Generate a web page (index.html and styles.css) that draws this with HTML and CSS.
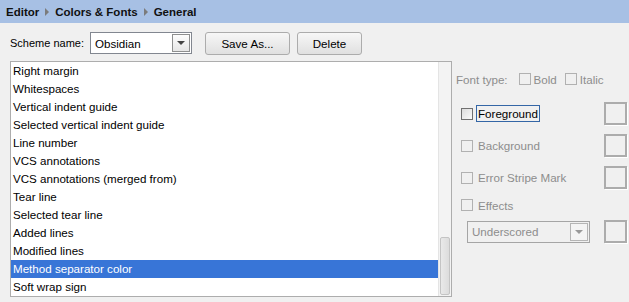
FILE: index.html
```html
<!DOCTYPE html>
<html lang="en">
<head>
  <meta charset="UTF-8">
  <title>Colors &amp; Fonts</title>
  <link rel="stylesheet" href="styles.css">
</head>
<body>
  <div class="crumbs">
    <span>Editor</span><span class="arrow"></span><span>Colors &amp; Fonts</span><span class="arrow"></span><span>General</span>
  </div>

  <div class="scheme-row">
    <span class="scheme-label">Scheme name:</span>
    <div class="combo scheme-combo">
      <span class="combo-text">Obsidian</span>
      <span class="combo-btn"><span class="down"></span></span>
    </div>
    <div class="btn save-btn">Save As...</div>
    <div class="btn delete-btn">Delete</div>
  </div>

  <div class="main">
    <div class="list-box">
      <div class="items">
        <div class="item">Right margin</div>
        <div class="item">Whitespaces</div>
        <div class="item">Vertical indent guide</div>
        <div class="item">Selected vertical indent guide</div>
        <div class="item">Line number</div>
        <div class="item">VCS annotations</div>
        <div class="item">VCS annotations (merged from)</div>
        <div class="item">Tear line</div>
        <div class="item">Selected tear line</div>
        <div class="item">Added lines</div>
        <div class="item">Modified lines</div>
        <div class="item selected">Method separator color</div>
        <div class="item">Soft wrap sign</div>
      </div>
      <div class="scroll-track">
        <div class="scroll-thumb"></div>
      </div>
    </div>

    <div class="props">
      <div class="font-type">
        <span class="font-label">Font type:</span>
        <span class="check off"></span><span class="font-opt">Bold</span>
        <span class="check off"></span><span class="font-opt">Italic</span>
      </div>
      <div class="prop-row first">
        <span class="check on"></span>
        <span class="prop-name focus">Foreground</span>
        <span class="swatch"></span>
      </div>
      <div class="prop-row">
        <span class="check off"></span>
        <span class="prop-name">Background</span>
        <span class="swatch"></span>
      </div>
      <div class="prop-row">
        <span class="check off"></span>
        <span class="prop-name">Error Stripe Mark</span>
        <span class="swatch"></span>
      </div>
      <div class="prop-row effects">
        <span class="check off"></span>
        <span class="prop-name">Effects</span>
      </div>
      <div class="prop-row effect-type">
        <div class="combo effect-combo">
          <span class="combo-text">Underscored</span>
          <span class="combo-btn"><span class="down"></span></span>
        </div>
        <span class="swatch"></span>
      </div>
    </div>
  </div>
</body>
</html>
```

FILE: styles.css
```css
body {
  margin: 0;
  background-color: #f0f0f0;
  font-family: "Liberation Sans", Arial, sans-serif;
  font-size: 11.6px;
  color: #000;
  width: 629px;
  height: 302px;
  overflow: hidden;
}
.crumbs {
  height: 23px;
  background-color: #a7c0e4;
  display: flex;
  align-items: center;
  padding-left: 6px;
  font-weight: bold;
  font-size: 11.5px;
  color: #111;
}
.arrow {
  width: 0;
  height: 0;
  border-left: 4px solid #7b7b7b;
  border-top: 4px solid transparent;
  border-bottom: 4px solid transparent;
  margin: 0 6px 0 6px;
}
.scheme-row {
  display: flex;
  align-items: center;
  height: 22px;
  margin-top: 9px;
  padding-left: 10px;
}
.scheme-label {
  width: 80px;
  font-size: 11px;
}
.combo {
  box-sizing: border-box;
  display: flex;
  align-items: center;
  border: 1px solid #828790;
  background-color: #fff;
  height: 22px;
  padding: 1px;
}
.combo-text {
  flex: 1;
  padding-left: 3px;
}
.combo-btn {
  box-sizing: border-box;
  width: 18px;
  height: 18px;
  border: 1px solid #8e8f8f;
  background: linear-gradient(#fdfdfd, #e6e6e6);
  display: flex;
  align-items: center;
  justify-content: center;
}
.down {
  width: 0;
  height: 0;
  border-top: 4px solid #444;
  border-left: 4px solid transparent;
  border-right: 4px solid transparent;
}
.scheme-combo {
  width: 102px;
}
.btn {
  box-sizing: border-box;
  height: 23px;
  border: 1px solid #acacac;
  border-radius: 3px;
  background: linear-gradient(#f7f7f7, #e0e0e0);
  display: flex;
  align-items: center;
  justify-content: center;
}
.save-btn {
  width: 85px;
  margin-left: 13px;
}
.delete-btn {
  width: 65px;
  margin-left: 7px;
}
.main {
  display: flex;
  margin-top: 7px;
}
.list-box {
  display: flex;
  width: 442px;
  height: 236px;
  box-sizing: border-box;
  border: 1px solid #adadad;
  margin-left: 10px;
  background-color: #fff;
}
.items {
  flex: 1;
}
.item {
  height: 18px;
  line-height: 18px;
  padding-left: 2px;
  white-space: nowrap;
}
.item.selected {
  background-color: #3875d7;
  color: #fff;
}
.scroll-track {
  width: 12px;
  background-color: #f3f3f3;
  border-left: 1px solid #e4e4e4;
  display: flex;
  flex-direction: column;
  align-items: center;
}
.scroll-thumb {
  box-sizing: border-box;
  width: 10px;
  height: 58px;
  margin-top: 175px;
  border: 1px solid #c4c4c4;
  border-radius: 2px;
  background: linear-gradient(90deg, #e9e9e9, #dcdcdc);
}
.props {
  flex: 1;
  padding-left: 4px;
  padding-right: 2px;
  color: #8d8d8d;
}
.font-type {
  display: flex;
  align-items: center;
  height: 18px;
  margin-top: 9px;
}
.font-label {
  margin-right: 11px;
}
.font-opt {
  margin-left: 3px;
  margin-right: 8px;
}
.check {
  box-sizing: border-box;
  width: 12px;
  height: 12px;
  border: 1px solid #b1b1b1;
}
.check.on {
  border-color: #707070;
  background: linear-gradient(135deg, #dcdcdc, #fafafa);
}
.prop-row {
  display: flex;
  align-items: center;
  height: 23px;
  margin-top: 9px;
  padding-left: 5px;
}
.prop-row.first {
  margin-top: 14px;
}
.prop-name {
  margin-left: 3px;
  padding: 1px 1px;
  border: 1px solid transparent;
}
.prop-name.focus {
  color: #000;
  border-color: #3466a6;
}
.swatch {
  box-sizing: border-box;
  width: 23px;
  height: 23px;
  margin-left: auto;
  border: 2px solid #acacac;
  box-shadow: 1px 1px 0 #fff;
}
.prop-row.effects {
  height: 18px;
  margin-top: 7px;
}
.prop-row.effect-type {
  margin-top: 6px;
  padding-left: 11px;
}
.effect-combo {
  width: 123px;
  background-color: transparent;
  border-color: #a5a5a5;
  color: #8d8d8d;
}
.effect-combo .combo-btn {
  border-color: #b5b5b5;
  background: #f4f4f4;
}
.effect-combo .down {
  border-top-color: #999;
}
```
